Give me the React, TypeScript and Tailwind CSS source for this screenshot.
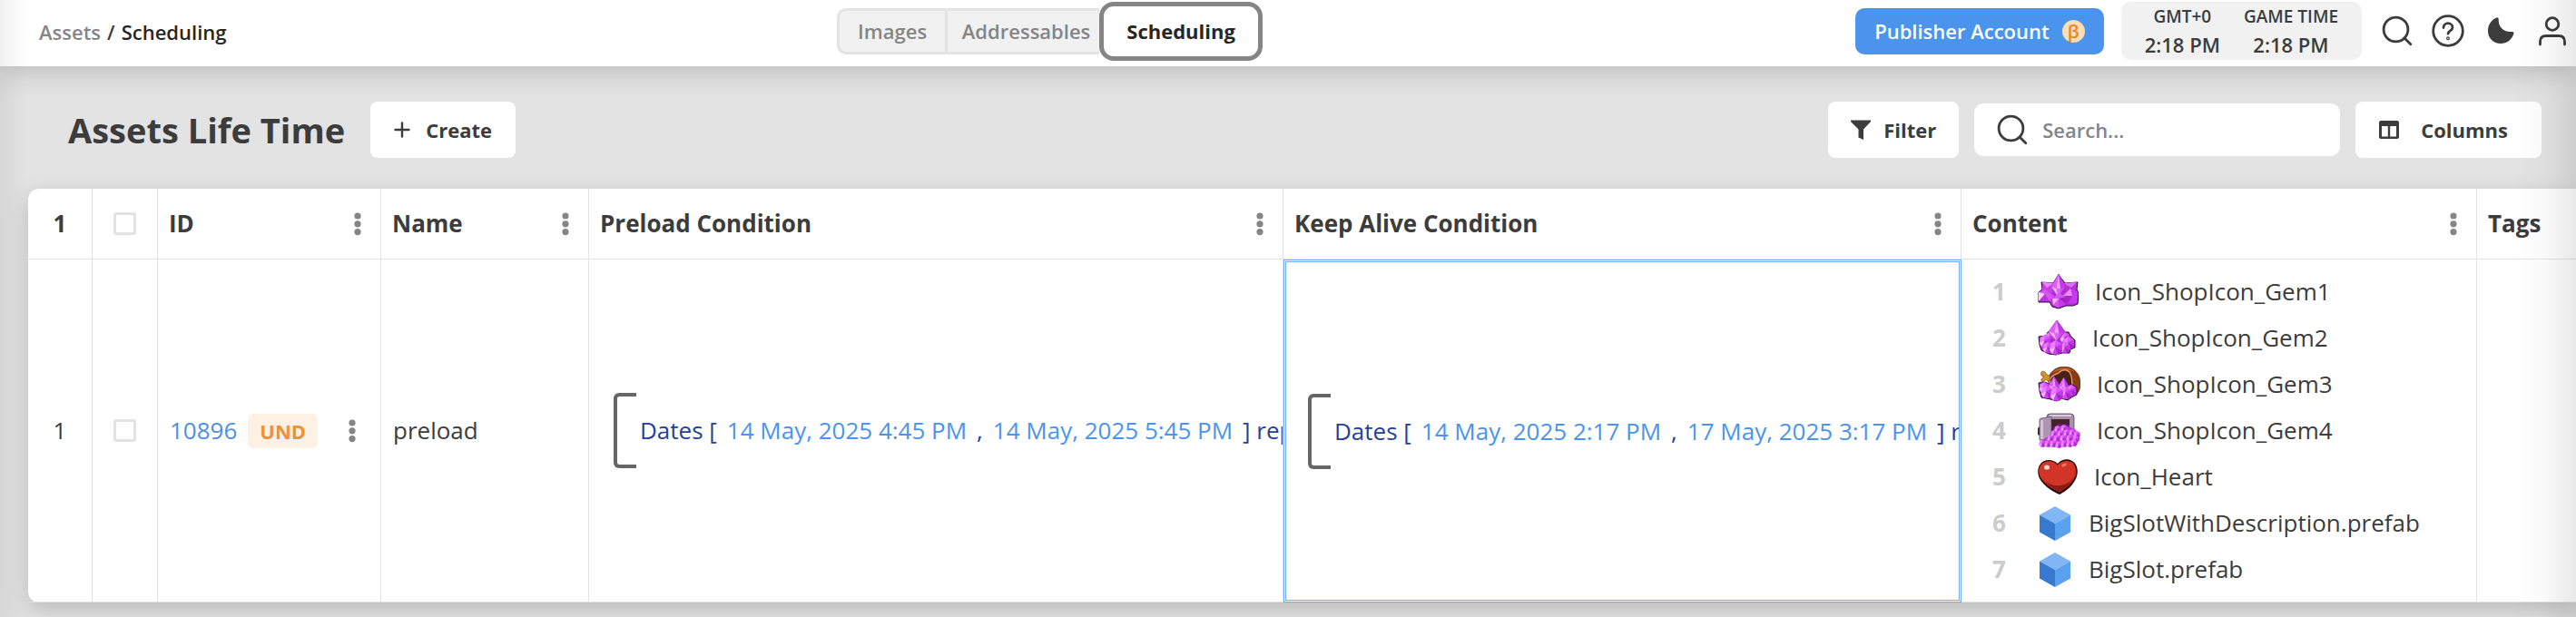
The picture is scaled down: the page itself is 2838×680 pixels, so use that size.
import type { ReactNode } from 'react';

const COLUMNS = [
  { label: 'ID', menu: true },
  { label: 'Name', menu: true },
  { label: 'Preload Condition', menu: true },
  { label: 'Keep Alive Condition', menu: true },
  { label: 'Content', menu: true },
  { label: 'Tags', menu: false },
];

function Dots() {
  return (
    <svg width="8" height="26" viewBox="0 0 8 26" fill="#858585">
      <circle cx="4" cy="4" r="3.6" /><circle cx="4" cy="12.8" r="3.6" /><circle cx="4" cy="21.6" r="3.6" />
    </svg>
  );
}

function SearchIcon() {
  return (
    <svg width="34" height="34" viewBox="0 0 34 34" fill="none" stroke="#3c3c3c" strokeWidth="2.8" strokeLinecap="round" className="shrink-0">
      <circle cx="15.5" cy="15.5" r="13.4" /><path d="M25 25L31.8 31.8" />
    </svg>
  );
}

function Gem({ size, cx, cy }: { size: number; cx: number; cy: number }) {
  return (
    <g transform={`translate(${cx} ${cy}) scale(${size / 10})`}>
      <path d="M0 -10L8 -5L9 4L3 10L-5 9L-9 3L-7 -6Z" fill="#d043f0" />
      <path d="M0 -10L-7 -6L-9 3L-1 -1Z" fill="#ea80fb" />
      <path d="M0 -10L8 -5L-1 -1Z" fill="#de58f8" />
      <path d="M-9 3L-1 -1L-5 9Z" fill="#f8bcff" />
      <path d="M-1 -1L9 4L3 10Z" fill="#a824cc" />
      <path d="M-1 -1L8 -5L9 4Z" fill="#c03ae4" />
    </g>
  );
}

function Spire({ x, y, w, h }: { x: number; y: number; w: number; h: number }) {
  return (
    <g transform={`translate(${x} ${y}) scale(${w / 20} ${h / 24})`}>
      <path d="M10 0L20 13L10 24L0 13Z" fill="#d14bf0" stroke="#7a2694" strokeWidth="0.8" />
      <path d="M10 0L0 13L7 15Z" fill="#e25ef8" />
      <path d="M10 0L7 15L13 15Z" fill="#ef9cfd" />
      <path d="M10 0L13 15L20 13Z" fill="#c337e6" />
      <path d="M0 13L7 15L10 24Z" fill="#f6b4ff" />
      <path d="M7 15L13 15L10 24Z" fill="#e25ffa" />
    </g>
  );
}

function Gem1() {
  return (
    <svg width="45" height="39" viewBox="0 0 45 39">
      <path d="M1 20L5 17L4 9L17 10L23 1L30 10L44 9L43 17L45 21L44 33L39 35L31 35L23 38L16 36L13 31L1 31Z" fill="#b32ed4" stroke="#2b0a36" strokeWidth="1" />
      <path d="M5 9L18 10L16 21L5 18Z" fill="#c443e2" /><path d="M5 9L18 10L10 15Z" fill="#ea84fa" />
      <path d="M43 9L28 10L31 21L42 18Z" fill="#b332d4" /><path d="M43 9L28 10L37 15Z" fill="#dd6af4" />
      <path d="M1 20L8 17L18 24L13 30L1 30Z" fill="#d654f2" /><path d="M1 20L8 22L1 30Z" fill="#fad0ff" /><path d="M8 22L13 30L1 30Z" fill="#bb35dc" />
      <path d="M44 20L36 16L28 24L33 33L43 32Z" fill="#c738f0" /><path d="M36 16L28 24L38 24Z" fill="#ec8cfb" /><path d="M38 24L33 33L28 24Z" fill="#a727c8" />
      <Spire x={15} y={0} w={16} h={26} />
      <path d="M16 27L23 21L31 25L31 33L23 37L17 34Z" fill="#d554f2" /><path d="M23 27L16 27L17 34Z" fill="#f6b0ff" /><path d="M23 27L31 25L31 33Z" fill="#9e25be" /><path d="M23 27L31 33L23 37Z" fill="#c43ae6" />
    </svg>
  );
}

function Gem2() {
  return (
    <svg width="42" height="39" viewBox="0 0 42 39">
      <path d="M1 18L9 17L11 13L34 13L36 17L41 22L41 30L36 32L35 36L27 36L20 38L12 37L4 33L2 27Z" fill="#b32ed4" stroke="#2b0a36" strokeWidth="1" />
      <Gem size={6} cx={13} cy={19} /><Gem size={6} cx={30} cy={19} />
      <Gem size={7} cx={8} cy={23} /><Gem size={7} cx={34} cy={25} />
      <Gem size={6} cx={11} cy={30} /><Gem size={6} cx={30} cy={30} />
      <Spire x={12} y={0} w={18} h={23} />
      <Gem size={8} cx={20} cy={30} />
    </svg>
  );
}

function Gem3() {
  return (
    <svg width="47" height="39" viewBox="0 0 47 39">
      <path d="M11 14C14 4 22 0 30 0C41 1 47 9 47 19C47 25 45 29 41 31L14 24Z" fill="#8a3b12" stroke="#3b1a0a" strokeWidth="0.6" />
      <path d="M16 7C22 0 34 -1 41 6C35 3 26 2 16 7Z" fill="#c4601f" />
      <path d="M13 15C16 8 20 9 23 7C27 2 34 3 36 8C38 12 38 16 38 22L14 22Z" fill="#4a2018" stroke="#e39a70" strokeWidth="1.4" />
      <path d="M4 6C6 4 9 6 9 8L14 11L12 17L9 14C6 18 3 17 4 14L7 11C4 11 3 9 4 6Z" fill="#d59325" stroke="#5c3510" strokeWidth="0.6" />
      <path d="M1 18L8 17L14 20L38 20L43 23L43 31L37 34L33 37L26 35L21 38L14 36L4 34L2 27Z" fill="#b32ed4" stroke="#2b0a36" strokeWidth="1" />
      <Gem size={6} cx={7} cy={23} /><Gem size={6} cx={37} cy={26} />
      <Spire x={12} y={11} w={12} h={18} /><Spire x={23} y={12} w={11} h={17} />
      <Gem size={7} cx={10} cy={28} /><Gem size={7} cx={31} cy={29} /><Gem size={8} cx={21} cy={30} />
    </svg>
  );
}

const PILE = [[22, 18], [29, 17], [18, 23], [25, 23], [32, 22], [38, 22], [43, 24], [14, 28], [21, 28], [28, 28], [35, 28], [42, 29], [5, 34], [11, 34], [17, 34], [23, 35], [29, 34], [35, 34], [40, 33]];

function Gem4() {
  return (
    <svg width="47" height="39" viewBox="0 0 47 39">
      <path d="M10 4Q10 1 14 1H36Q40 1 40 5V28H10Z" fill="#a791a9" stroke="#55445a" strokeWidth="0.8" />
      <path d="M13 2H37V4H13Z" fill="#dacbdb" />
      <path d="M15 7H35V27H15Z" fill="#43222c" />
      <path d="M17 16L23 12L35 13V27H17Z" fill="#6b2278" />
      <path d="M0 17L2 15V25L0 24Z" fill="#2e2a38" />
      <path d="M2 8Q2 6 4 6L15 4V30H2Z" fill="#ad97b0" stroke="#5f4d63" strokeWidth="0.8" />
      <path d="M3 8H6V29H3Z" fill="#d3c5d5" />
      <path d="M2 35L5 30L13 25L19 16L30 14L41 18L46 24L46 30L41 36L33 36L23 38L13 37L5 37Z" fill="#bd34de" />
      {PILE.map(([x, y]) => <Gem key={`${x}-${y}`} size={4} cx={x} cy={y} />)}
    </svg>
  );
}

function Heart() {
  return (
    <svg width="44" height="39" viewBox="0 0 44 39">
      <path d="M22 5C26 0 33 -1 38 2C43 5 45 12 43 19C40 28 32 35 24 39C14 35 4 27 1 19C-1 12 1 5 7 2C12 0 18 1 22 5Z" fill="#2a0606" />
      <path d="M22 6.500C26 2 32 1 37 3C42 6 43 12 42 18C38 27 31 32 24 36.500C15 32 5 26 2 18C0 12 2 6 7 3.500C12 1 18 2.500 22 6.500Z" fill="#d23427" />
      <path d="M40 7C44 20 34 27 24 30C15 30 7 25 3 19C7 28 16 33 24 36C31 32 38 27 41 18C43 13 42 9 40 7Z" fill="#b02a20" />
      <path d="M9 25C18 32 30 29 36 25C32 31 28 34 24 36C18 33 13 30 9 25Z" fill="#861b18" />
      <ellipse cx="10" cy="9" rx="3" ry="2.6" fill="#f8ddcd" /><ellipse cx="29" cy="6.5" rx="3" ry="1.6" fill="#e5785f" transform="rotate(-25 29 6.5)" />
    </svg>
  );
}

function Cube() {
  return (
    <svg width="38" height="38" viewBox="0 0 38 38">
      <path d="M19 0L36 9.5L19 19L2 9.5Z" fill="#80b6f3" />
      <path d="M2 9.5L19 19V38L2 28.5Z" fill="#3779cf" />
      <path d="M36 9.5L19 19V38L36 28.5Z" fill="#5ba1ee" />
    </svg>
  );
}

const CONTENT: { name: string; icon: ReactNode }[] = [
  { name: 'Icon_ShopIcon_Gem1', icon: <Gem1 /> },
  { name: 'Icon_ShopIcon_Gem2', icon: <Gem2 /> },
  { name: 'Icon_ShopIcon_Gem3', icon: <Gem3 /> },
  { name: 'Icon_ShopIcon_Gem4', icon: <Gem4 /> },
  { name: 'Icon_Heart', icon: <Heart /> },
  { name: 'BigSlotWithDescription.prefab', icon: <Cube /> },
  { name: 'BigSlot.prefab', icon: <Cube /> },
];

function Check({ label }: { label: string }) {
  return <input type="checkbox" aria-label={label} className="block mx-auto size-[25px] appearance-none rounded-[3px] border-3 border-[#e3e3e3] bg-white checked:bg-[#4a94ed]" />;
}

function Condition({ from, to }: { from: string; to: string }) {
  return (
    <div className="flex items-center overflow-hidden whitespace-nowrap pl-[27px] text-[#25419a]">
      <span className="h-[83px] w-[25px] shrink-0 rounded-l-md border-4 border-r-0 border-[#666]" />
      <span className="ml-1">Dates [</span>
      <span className="mx-[11px] text-[#4a94ed]">{from}</span>
      <span>,</span>
      <span className="mx-[11px] text-[#4a94ed]">{to}</span>
      <span>] repeat</span>
    </div>
  );
}

function Clock({ zone }: { zone: string }) {
  return (
    <div className="flex flex-col items-center">
      <span className="text-[19px] leading-8">{zone}</span>
      <span className="text-[22px] leading-[30px]">2:18 PM</span>
    </div>
  );
}

export default function App() {
  return (
    <div className="relative min-h-screen overflow-hidden bg-[#e3e3e3] text-[#3c3c3c] font-['Open_Sans','Noto_Sans',sans-serif]">
      <header className="relative flex h-[73px] items-start justify-between bg-white pl-[43px] pr-[10px] shadow-[0_4px_32px_rgba(0,0,0,0.2)]">
        <nav className="flex w-[226px] gap-[7px] pt-[18px] text-[22px] leading-[34px] font-semibold">
          <a href="#assets" className="text-[#858585]">Assets</a>
          <span>/</span>
          <a href="#scheduling" className="text-[#262626]">Scheduling</a>
        </nav>

        <div className="flex items-start pt-[2px] text-[22px] font-semibold text-[#858585]">
          <button className="mt-[7px] h-[51px] w-[122px] rounded-l-[10px] border-3 border-[#e3e3e3] bg-[#f1f1f1]">Images</button>
          <button className="mt-[7px] h-[51px] w-[167px] border-y-3 border-[#e3e3e3] bg-[#f1f1f1] pl-[6px]">Addressables</button>
          <button className="h-[65px] w-[180px] rounded-2xl border-5 border-[#858585] bg-white font-bold text-[#262626]">Scheduling</button>
        </div>

        <div className="flex items-start pt-[2px]">
          <button className="mt-[7px] flex h-[51px] items-center gap-[14px] rounded-[10px] bg-[#4a94ed] px-[21px] text-[22px] font-semibold text-white">
            Publisher Account
            <span className="flex size-[25px] items-center justify-center rounded-full bg-[#fbdfb4] text-[20px] leading-[25px] text-[#e8832c]">β</span>
          </button>
          <div className="ml-[19px] flex h-16 gap-[26px] rounded-[10px] bg-[#f1f1f1] px-[26px] font-semibold">
            <Clock zone="GMT+0" />
            <Clock zone="GAME TIME" />
          </div>
          <button aria-label="Search" className="ml-[22px] mt-[15px]"><SearchIcon /></button>
          <button aria-label="Help" className="ml-[21px] mt-[14px]">
            <svg width="36" height="36" viewBox="0 0 36 36" fill="none" stroke="#3c3c3c" strokeWidth="2.8" strokeLinecap="round">
              <circle cx="18" cy="18" r="16.3" />
              <path d="M13 14.5C13 11.5 15.2 9.7 18 9.7S23 11.6 23 14.2C23 17.6 18 18 18 21.2" />
              <circle cx="18" cy="26.3" r="0.6" />
            </svg>
          </button>
          <button aria-label="Dark mode" className="ml-[25px] mt-[16px]">
            <svg width="30" height="31" viewBox="0 0 30 31" fill="#3c3c3c"><path d="M10.5 1.6C11.8 1 12.8 1.7 12.7 3.2C12.2 11.5 18.5 18 27.5 17C29 16.8 29.8 17.5 29.4 19C27.6 25.5 22 30 15 30C7 30 1 24 1 16.2C1 9.5 4.5 4 10.5 1.6Z" /></svg>
          </button>
          <button aria-label="Profile" className="ml-[26px] mt-[16px]">
            <svg width="32" height="33" viewBox="0 0 32 33" fill="none" stroke="#3c3c3c" strokeWidth="2.8" strokeLinecap="round">
              <circle cx="16" cy="8.5" r="6.8" /><path d="M2.5 31V28Q2.5 21.5 9 21.5H23Q29.5 21.5 29.5 28V31" />
            </svg>
          </button>
        </div>
      </header>

      <div className="flex items-center pl-[75px] pr-[38px] pt-[39px] text-[22px] font-bold">
        <h1 className="text-[38px] leading-[62px]">Assets Life Time</h1>
        <button className="ml-[28px] flex h-[62px] items-center gap-[17px] rounded-lg bg-white px-[26px]">
          <svg width="18" height="18" viewBox="0 0 18 18" stroke="#3c3c3c" strokeWidth="2.4" strokeLinecap="round"><path d="M9 1.5V16.5M1.5 9H16.5" /></svg>
          Create
        </button>
        <button className="ml-auto flex h-[62px] items-center gap-[14px] rounded-lg bg-white px-[25px]">
          <svg width="22" height="22" viewBox="0 0 22 22" fill="#3c3c3c"><path d="M0 0.5H22V2L14 10.5V22L8.5 19.5V10.5L0 2Z" /></svg>
          Filter
        </button>
        <label className="ml-[17px] flex h-[58px] w-[403px] items-center gap-[16px] rounded-[10px] bg-white px-[25px]">
          <SearchIcon />
          <input type="text" aria-label="Search" placeholder="Search..." className="w-full min-w-0 font-semibold outline-none placeholder:text-[#858585]" />
        </label>
        <button className="ml-[17px] flex h-[62px] items-center gap-[24px] rounded-lg bg-white pl-[26px] pr-[37px]">
          <svg width="22" height="20" viewBox="0 0 22 20"><path fillRule="evenodd" fill="#3c3c3c" d="M2 0H20Q22 0 22 2V18Q22 20 20 20H2Q0 20 0 18V2Q0 0 2 0ZM3 6V17.5H9.8V6ZM12.2 6V17.5H19V6Z" /></svg>
          Columns
        </button>
      </div>

      <div className="ml-[31px] mt-[34px] rounded-l-xl bg-white shadow-[0_8px_24px_rgba(0,0,0,0.18)]">
        <table className="w-full table-fixed border-separate border-spacing-0 text-[26px]">
          <colgroup>
            <col className="w-[71px]" />
            <col className="w-[72px]" />
            <col className="w-[246px]" />
            <col className="w-[229px]" />
            <col className="w-[765px]" />
            <col className="w-[747px]" />
            <col className="w-[568px]" />
            <col />
          </colgroup>
          <thead>
            <tr className="h-[78px]">
              <th className="border-b border-r border-[#e3e3e3] font-bold">1</th>
              <th className="border-b border-r border-[#e3e3e3]"><Check label="Select all rows" /></th>
              {COLUMNS.map(c => (
                <th key={c.label} className="border-b border-r border-[#e3e3e3] pl-3 pr-[21px] font-bold last:border-r-0">
                  <div className="flex items-center justify-between">
                    {c.label}
                    {c.menu && <button aria-label={`${c.label} column menu`}><Dots /></button>}
                  </div>
                </th>
              ))}
            </tr>
          </thead>
          <tbody>
            <tr className="h-[378px]">
              <td className="border-b border-r border-[#e3e3e3] text-center">1</td>
              <td className="border-b border-r border-[#e3e3e3]"><Check label="Select row 1" /></td>
              <td className="border-b border-r border-[#e3e3e3] pl-[13px] pr-[27px]">
                <div className="flex items-center">
                  <a href="#10896" className="text-[#4a90e2]">10896</a>
                  <span className="ml-3 rounded-md bg-[#fdf1e4] px-[13px] text-[22px] leading-[38px] font-bold text-[#ee9036]">UND</span>
                  <button aria-label="Row menu" className="ml-auto"><Dots /></button>
                </div>
              </td>
              <td className="border-b border-r border-[#e3e3e3] pl-[13px]">preload</td>
              <td className="border-b border-r border-[#e3e3e3]"><Condition from="14 May, 2025 4:45 PM" to="14 May, 2025 5:45 PM" /></td>
              <td className="border-3 border-double border-[#72adef]">
                <div className="-ml-[3px]"><Condition from="14 May, 2025 2:17 PM" to="17 May, 2025 3:17 PM" /></div>
              </td>
              <td className="border-b border-r border-[#e3e3e3]">
                <ol className="pl-[34px]">
                  {CONTENT.map((item, i) => (
                    <li key={item.name} className="flex h-[51px] items-center">
                      <span className="w-[50px] font-bold text-[#ccc]">{i + 1}</span>
                      {item.icon}
                      <span className="ml-[18px]">{item.name}</span>
                    </li>
                  ))}
                </ol>
              </td>
              <td className="border-b border-[#e3e3e3]" />
            </tr>
          </tbody>
        </table>
      </div>

      {/* edge shading over the scroll area */}
      <div className="pointer-events-none absolute inset-y-0 left-0 w-[30px] bg-linear-to-r from-black/6 to-transparent" />
      <div className="pointer-events-none absolute inset-y-0 right-0 w-[70px] bg-linear-to-l from-black/9 via-black/2 to-transparent" />
    </div>
  );
}
